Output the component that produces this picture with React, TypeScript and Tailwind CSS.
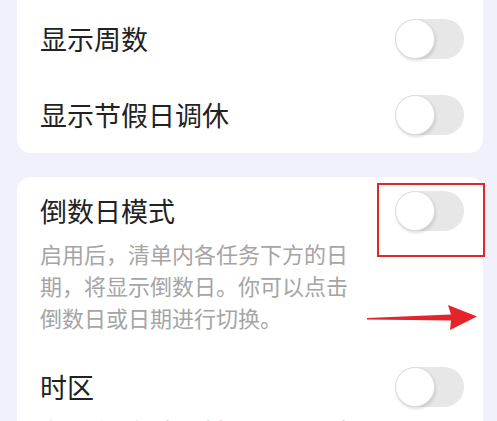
import React from "react";

function Toggle() {
  return (
    <div className="relative h-[40px] w-[69px] shrink-0 rounded-full bg-[#e7e7e7]">
      <div className="absolute left-0 top-0 h-[40px] w-[40px] rounded-full border border-[#dcdcdc] bg-white shadow-[1px_2px_3px_rgba(0,0,0,0.12)]" />
    </div>
  );
}

export default function App() {
  const font = { fontFamily: '"Noto Sans CJK SC", "Noto Sans", sans-serif' };
  return (
    <div className="h-[421px] w-[497px] overflow-hidden bg-[#f0f1fb] pl-[17px] pr-[14px]" style={font}>
      <div className="-mt-[20px] rounded-[14px] bg-white pl-[23px] pr-[19px] pt-[21px]">
        <div className="flex h-[76px] items-center justify-between">
          <span className="text-[27px] leading-[36px] text-[#222]">显示周数</span>
          <Toggle />
        </div>
        <div className="flex h-[76px] items-center justify-between">
          <span className="text-[27px] leading-[36px] text-[#222]">显示节假日调休</span>
          <Toggle />
        </div>
      </div>

      <div className="relative mt-[24px] rounded-[14px] bg-white pb-[20px] pl-[23px] pr-[19px] pt-[16px]">
        <div className="flex items-start justify-between">
          <div className="w-[312px]">
            <div className="text-[27px] leading-[36px] text-[#222]">倒数日模式</div>
            <div className="mt-[8px] text-[22px] leading-[32px] text-[#a5a5a5]">
              启用后，清单内各任务下方的日期，将显示倒数日。你可以点击倒数日或日期进行切换。
            </div>
          </div>
          <div className="-mt-[2px]">
            <Toggle />
          </div>
        </div>

        <div className="mt-[36px] flex items-start justify-between">
          <div className="w-[312px]">
            <div className="text-[27px] leading-[36px] text-[#222]">时区</div>
            <div className="mt-[8px] text-[22px] leading-[32px] text-[#a5a5a5]">
              启用后，在时间选择界面设置时区，任务将按所选时区提醒。
            </div>
          </div>
          <div className="-mt-[2px]">
            <Toggle />
          </div>
        </div>

        <div className="absolute left-[360px] top-[6px] h-[74px] w-[108px] border-2 border-[#e0262c]" />
        <svg
          className="absolute left-[350px] top-[126px]"
          width="112"
          height="30"
          viewBox="0 0 112 30"
        >
          <path
            d="M0 15 L84 11.5 L81 2 L110 13.5 L83 27 L84 17.5 L0 16.5 Z"
            fill="#e5232b"
          />
        </svg>
      </div>
    </div>
  );
}
